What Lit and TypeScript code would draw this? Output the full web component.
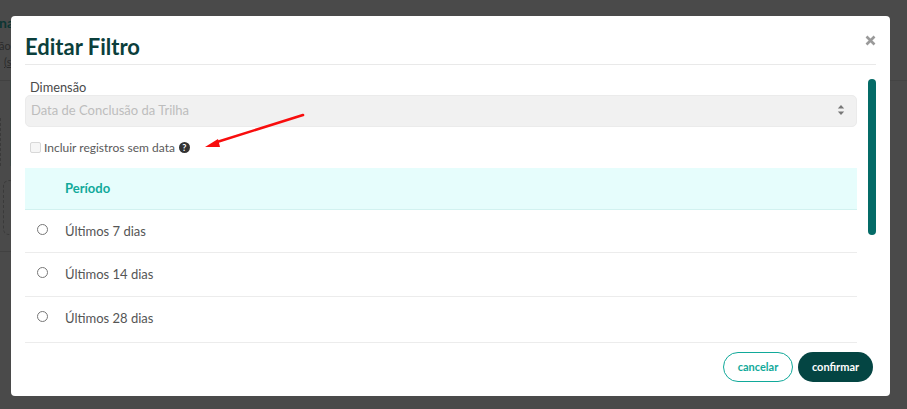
import { LitElement, html, css } from 'lit'
import { customElement } from 'lit/decorators.js'

const periods = ['Últimos 7 dias', 'Últimos 14 dias', 'Últimos 28 dias']

@customElement('app-root')
export class AppRoot extends LitElement {
	static styles = css`
		:host {
			display: block;
			position: relative;
			width: 907px;
			height: 409px;
			overflow: hidden;
			background: #4a4a4a;
			font-family: Lato, 'Open Sans', sans-serif;
			color: #4a4a4a;
		}
		.behind {
			position: absolute;
			left: 0;
			top: 0;
			width: 11px;
			height: 409px;
			overflow: hidden;
			font-size: 11px;
			color: #2b2b2b;
		}
		.behind span {
			position: absolute;
			left: 0;
			white-space: nowrap;
		}
		.behind .na {
			top: 14px;
			left: -1px;
			color: #0c3532;
			font-weight: 700;
			font-size: 14px;
		}
		.behind .ao {
			top: 39px;
			left: -1px;
		}
		.behind .link {
			top: 55px;
			left: 4px;
			text-decoration: underline;
		}
		.behind .line {
			left: 0;
			width: 11px;
			height: 1px;
			background: #414141;
		}
		.behind .l1 {
			top: 80px;
		}
		.behind .l2 {
			top: 251px;
		}
		.behind .dash {
			left: 0;
			top: 118px;
			width: 0;
			height: 48px;
			border-left: 1px dashed #3a3a3a;
		}
		.behind .edge {
			left: 10px;
			top: 80px;
			width: 1px;
			height: 86px;
			background: #3c4644;
		}
		.behind .round {
			left: 3px;
			top: 180px;
			width: 12px;
			height: 55px;
			box-sizing: border-box;
			border: 1px dashed #3a3a3a;
			border-radius: 7px;
		}
		.rule {
			position: absolute;
			left: 890px;
			right: 0;
			top: 80px;
			height: 1px;
			background: #444;
		}
		.modal {
			position: absolute;
			left: 11px;
			top: 16px;
			width: 879px;
			height: 380px;
			box-sizing: border-box;
			background: #fff;
			border-radius: 4px;
			padding: 0 14px;
			display: flex;
			flex-direction: column;
		}
		.head {
			height: 49px;
			flex: none;
			box-sizing: border-box;
			border-bottom: 1px solid #e9e9e9;
			display: flex;
			align-items: flex-start;
			justify-content: space-between;
		}
		h1 {
			margin: 16px 0 0;
			font-size: 22px;
			line-height: 30px;
			font-weight: 700;
			color: #0b3f3c;
		}
		.close {
			margin: 19px 0 0;
			width: 11px;
			height: 11px;
			display: block;
		}
		.body {
			flex: 1;
			display: flex;
			gap: 11px;
			min-height: 0;
		}
		.content {
			flex: 1;
			min-width: 0;
		}
		.bar {
			width: 8px;
			height: 156px;
			flex: none;
			margin-top: 14px;
			background: #046b67;
			border-radius: 4px;
		}
		.label {
			margin: 14px 0 0 5px;
			font-size: 12.8px;
			line-height: 17px;
			height: 16px;
			color: #4a4a4a;
		}
		.select {
			height: 32px;
			box-sizing: border-box;
			background: #f1f1f1;
			border: 1px solid #ebebeb;
			border-radius: 5px;
			display: flex;
			align-items: center;
			justify-content: space-between;
			padding: 0 11px 2px 5px;
			font-size: 13px;
			color: #bdbdbd;
		}
		.check {
			margin: 12px 0 0 5px;
			height: 16px;
			display: flex;
			align-items: center;
			font-size: 12px;
			color: #5a5a5a;
		}
		.box {
			width: 9px;
			height: 9px;
			border: 1px solid #d8d8d8;
			border-radius: 2px;
			background: #f6f6f6;
			margin-right: 3px;
		}
		.help {
			margin-left: 4px;
			width: 11px;
			height: 11px;
			border-radius: 50%;
			background: #333;
			color: #fff;
			font-size: 9px;
			font-weight: 700;
			line-height: 11px;
			text-align: center;
		}
		.thead {
			margin-top: 13px;
			height: 42px;
			box-sizing: border-box;
			background: #e6fdfc;
			border-bottom: 1px solid #d2f2f0;
			padding: 0 0 2px 40px;
			display: flex;
			align-items: center;
			font-size: 13px;
			font-weight: 700;
			color: #11a99a;
		}
		.row {
			display: flex;
			align-items: flex-start;
			box-sizing: border-box;
			padding-top: 13px;
			border-bottom: 1px solid #ececec;
			font-size: 13px;
			line-height: 17px;
			color: #555;
		}
		.row:nth-child(1) {
			height: 43px;
		}
		.row:nth-child(2) {
			height: 44px;
		}
		.row:nth-child(3) {
			height: 46px;
		}
		.radio {
			width: 9px;
			height: 9px;
			border: 1px solid #777;
			border-radius: 50%;
			margin: 1px 17px 0 12px;
			flex: none;
		}
		.foot {
			flex: none;
			height: 53px;
			display: flex;
			justify-content: flex-end;
			align-items: flex-start;
			gap: 5px;
			padding: 9px 3px 0 0;
			box-sizing: border-box;
		}
		.btn {
			height: 30px;
			border-radius: 15px;
			box-sizing: border-box;
			display: flex;
			align-items: center;
			justify-content: center;
			padding-bottom: 1px;
			font-size: 11px;
			font-weight: 700;
		}
		.cancel {
			width: 70px;
			border: 1px solid #11a99a;
			color: #11a99a;
			background: #fff;
		}
		.confirm {
			width: 75px;
			background: #044543;
			color: #fff;
		}
		.arrow {
			position: absolute;
			left: 200px;
			top: 108px;
			width: 110px;
			height: 44px;
		}
	`

	render() {
		return html`
			<div class="behind">
				<span class="na">na:</span>
				<span class="ao">ão</span>
				<span class="link">(s</span>
				<span class="line l1"></span>
				<span class="line l2"></span>
				<span class="dash"></span>
				<span class="edge"></span>
				<span class="round"></span>
			</div>
			<div class="rule"></div>
			<div class="modal">
				<div class="head">
					<h1>Editar Filtro</h1>
					<svg class="close" viewBox="0 0 11 11">
						<path d="M1.5 1.5l8 8M9.5 1.5l-8 8" stroke="#9a9a9a" stroke-width="2.6" fill="none" />
					</svg>
				</div>
				<div class="body">
					<div class="content">
						<div class="label">Dimensão</div>
						<div class="select">
							<span>Data de Conclusão da Trilha</span>
							<svg width="8" height="12" viewBox="0 0 8 12">
								<path d="M4 1l3.2 3.6H.8zM4 11L.8 7.4h6.4z" fill="#777" />
							</svg>
						</div>
						<div class="check">
							<span class="box"></span>
							<span>Incluir registros sem data</span>
							<span class="help">?</span>
						</div>
						<div class="thead">Período</div>
						<div>
							${periods.map(
								(p) => html`<div class="row"><span class="radio"></span><span>${p}</span></div>`,
							)}
						</div>
					</div>
					<div class="bar"></div>
				</div>
				<div class="foot">
					<div class="btn cancel">cancelar</div>
					<div class="btn confirm">confirmar</div>
				</div>
			</div>
			<svg class="arrow" viewBox="0 0 110 44">
				<path d="M103 7L17 34" stroke="#f80d0d" stroke-width="2.6" stroke-linecap="round" fill="none" />
				<path d="M5 39L18 31l2 8z" fill="#f80d0d" />
			</svg>
		`
	}
}
